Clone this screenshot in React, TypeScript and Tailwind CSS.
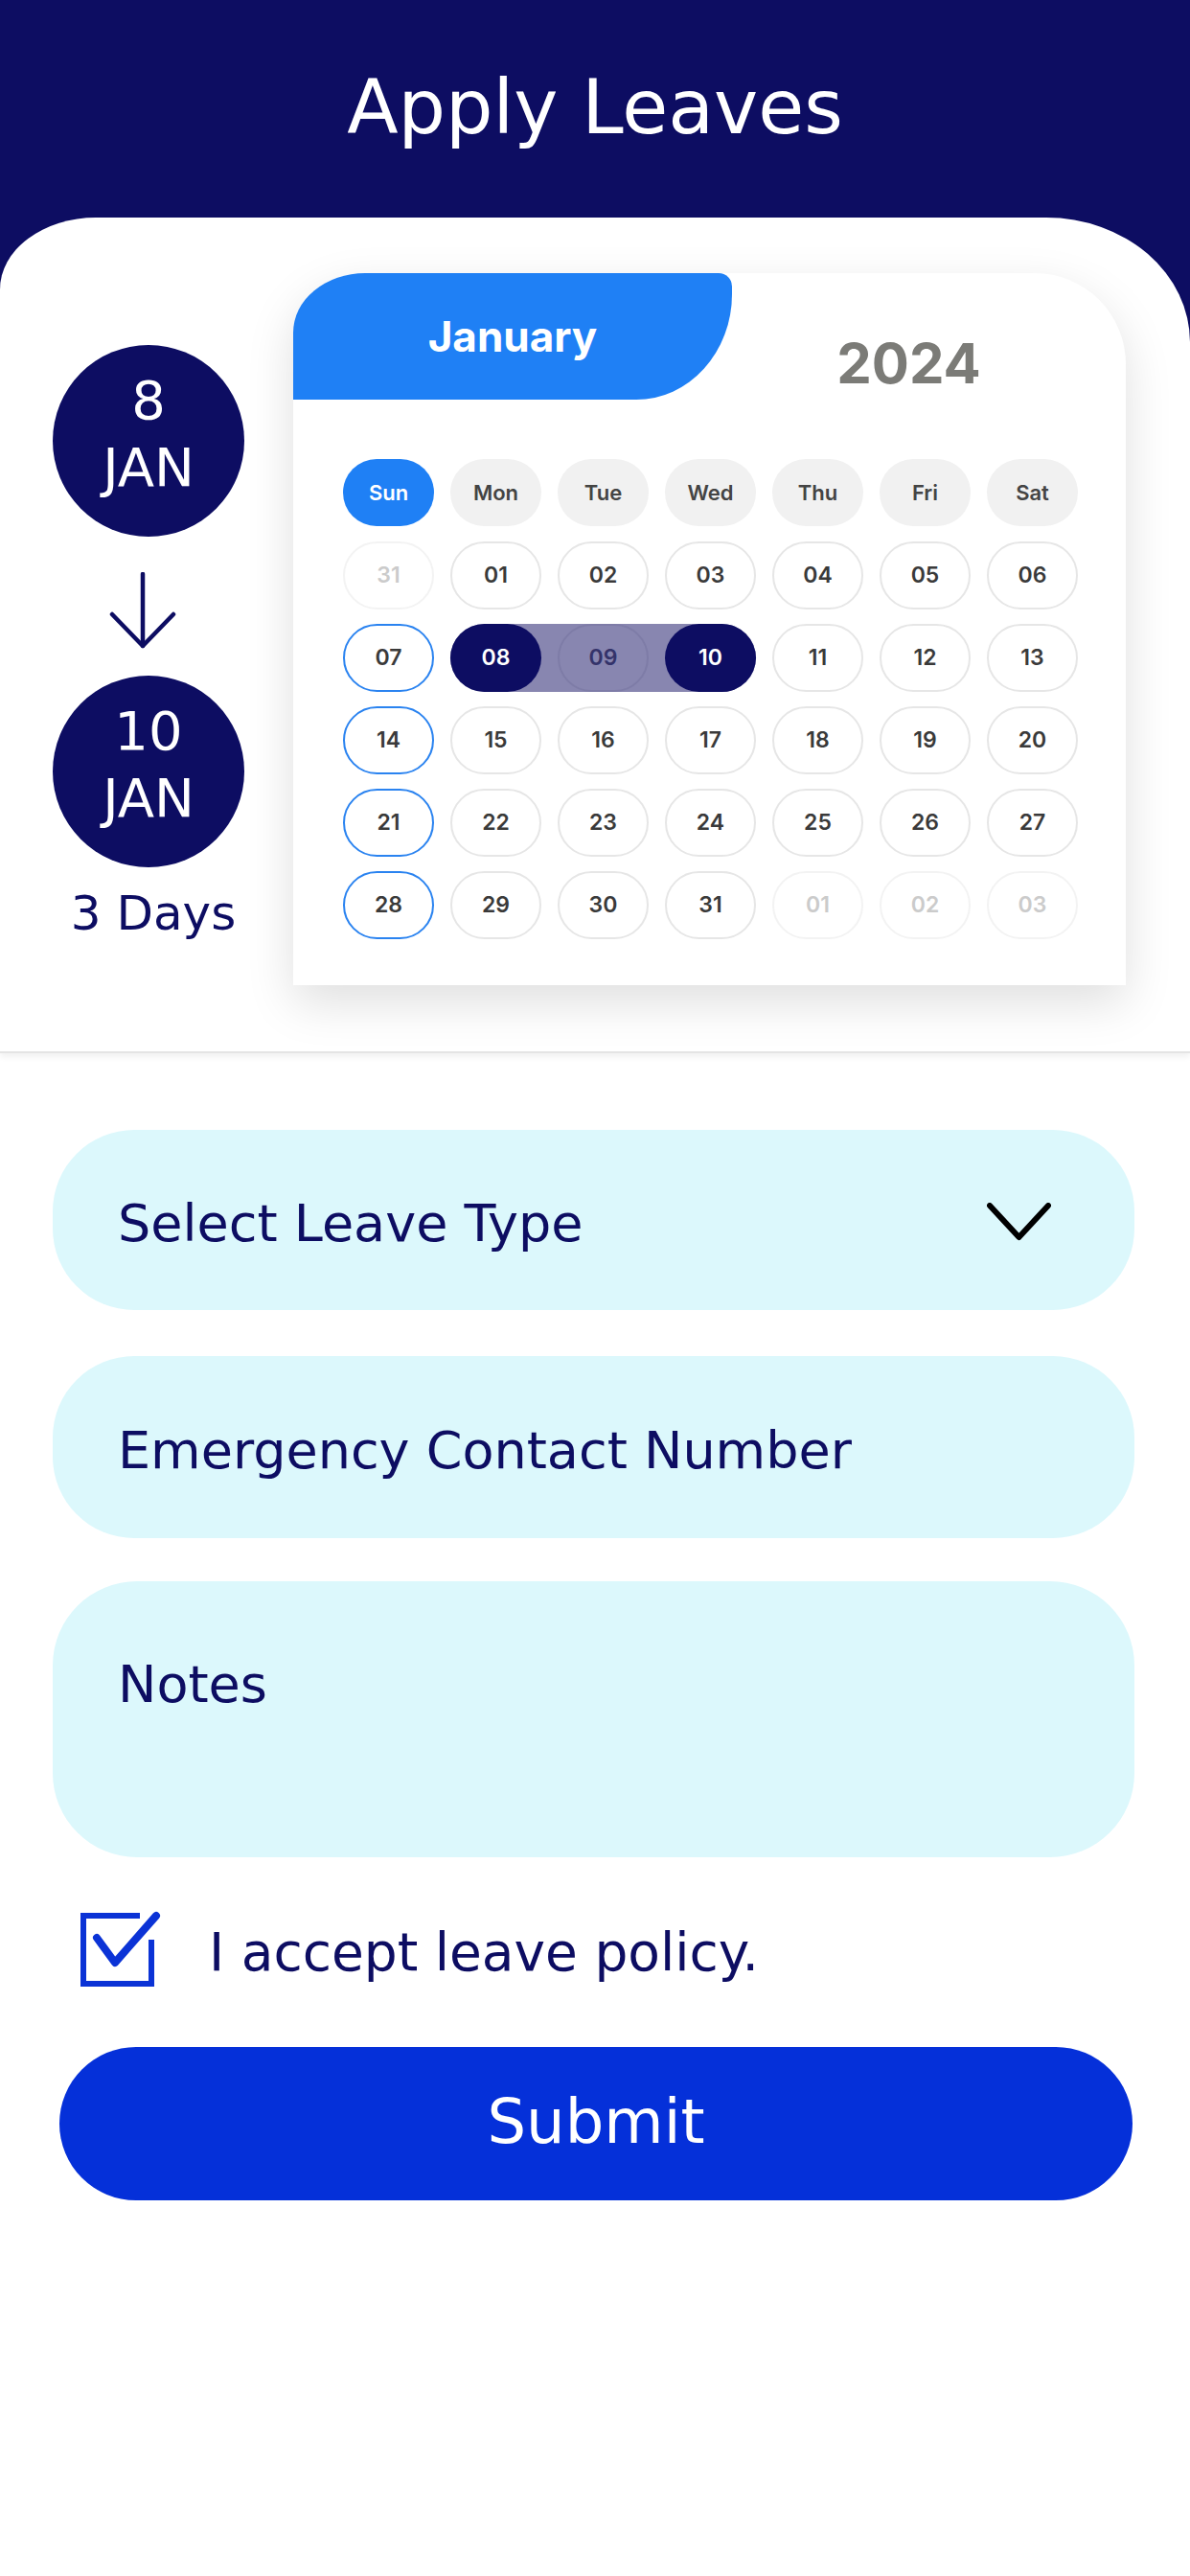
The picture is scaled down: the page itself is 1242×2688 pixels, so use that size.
import React from "react";

type Kind = "normal" | "muted" | "sun" | "sel" | "range";
type Cell = { d: string; k: Kind };

const colStart = [
  "col-start-1",
  "col-start-2",
  "col-start-3",
  "col-start-4",
  "col-start-5",
  "col-start-6",
  "col-start-7",
];

const weeks: Cell[][] = [
  [
    { d: "31", k: "muted" },
    { d: "01", k: "normal" },
    { d: "02", k: "normal" },
    { d: "03", k: "normal" },
    { d: "04", k: "normal" },
    { d: "05", k: "normal" },
    { d: "06", k: "normal" },
  ],
  [
    { d: "07", k: "sun" },
    { d: "08", k: "sel" },
    { d: "09", k: "range" },
    { d: "10", k: "sel" },
    { d: "11", k: "normal" },
    { d: "12", k: "normal" },
    { d: "13", k: "normal" },
  ],
  [
    { d: "14", k: "sun" },
    { d: "15", k: "normal" },
    { d: "16", k: "normal" },
    { d: "17", k: "normal" },
    { d: "18", k: "normal" },
    { d: "19", k: "normal" },
    { d: "20", k: "normal" },
  ],
  [
    { d: "21", k: "sun" },
    { d: "22", k: "normal" },
    { d: "23", k: "normal" },
    { d: "24", k: "normal" },
    { d: "25", k: "normal" },
    { d: "26", k: "normal" },
    { d: "27", k: "normal" },
  ],
  [
    { d: "28", k: "sun" },
    { d: "29", k: "normal" },
    { d: "30", k: "normal" },
    { d: "31", k: "normal" },
    { d: "01", k: "muted" },
    { d: "02", k: "muted" },
    { d: "03", k: "muted" },
  ],
];

const kindClass: Record<Kind, string> = {
  normal: "border-2 border-[#e6e6e6] bg-white text-[#3a3a3a]",
  muted: "border-2 border-[#f3f3f3] bg-white text-[#cbcbcb]",
  sun: "border-2 border-[#2a83f0] bg-white text-[#3a3a3a]",
  sel: "bg-[#0d0d62] text-white",
  range: "border-2 border-[#7e7ca7] bg-transparent text-[#34336a]",
};

const days = ["Sun", "Mon", "Tue", "Wed", "Thu", "Fri", "Sat"];

function DateCircle({ day }: { day: string }) {
  return (
    <div className="w-[200px] h-[200px] rounded-full bg-[#0d0d62] flex flex-col items-center justify-center pb-[14px] text-white font-['DejaVu_Sans',sans-serif] text-[56px] leading-[70px]">
      <span>{day}</span>
      <span>JAN</span>
    </div>
  );
}

export default function App() {
  return (
    <div className="w-[1242px] min-h-[2688px] bg-white font-['DejaVu_Sans',sans-serif]">
      <div className="bg-[#0d0d62]">
        <div className="h-[227px] flex items-center justify-center pb-[4px]">
          <h1 className="text-white text-[78px] leading-none font-normal">Apply Leaves</h1>
        </div>
        <div className="bg-white rounded-tl-[100px_75px] rounded-tr-[150px_130px] pt-[58px] pb-[69px] border-b-2 border-[#e4e4e4] shadow-[0_4px_6px_rgba(0,0,0,0.06)]">
          <div className="flex items-start pl-[55px] gap-[51px]">
            <div className="w-[200px] mt-[75px] flex flex-col items-center">
              <DateCircle day="8" />
              <svg
                width="72"
                height="80"
                viewBox="0 0 72 80"
                className="mt-[37px] mr-[12px]"
                fill="none"
                stroke="#0d0d62"
                strokeWidth="4.5"
                strokeLinecap="round"
                strokeLinejoin="round"
              >
                <path d="M36 2 V77" />
                <path d="M4 44 L36 77 L68 44" />
              </svg>
              <div className="mt-[28px]">
                <DateCircle day="10" />
              </div>
              <div className="mt-[23px] ml-[10px] text-[50px] leading-none text-[#0d0d62]">3 Days</div>
            </div>

            <div className="w-[869px] h-[743px] bg-white rounded-tl-[75px_62px] rounded-tr-[95px] shadow-[0_18px_50px_rgba(0,0,0,0.13)] overflow-hidden font-['Inter',sans-serif]">
              <div className="h-[132px] flex">
                <div className="w-[458px] h-full bg-[#1f80f5] rounded-br-[100px_110px] rounded-tr-[14px] flex items-center justify-center">
                  <span className="text-white text-[44px] font-bold leading-none">January</span>
                </div>
                <div className="flex-1 flex justify-center pt-[65px] pr-[42px]">
                  <span className="text-[#7b7b77] text-[58px] font-bold leading-none">2024</span>
                </div>
              </div>

              <div className="mt-[62px] pl-[52px] pr-[50px] flex flex-col gap-[15px]">
                <div className="grid grid-cols-7 gap-x-[17px] mb-[1px]">
                  {days.map((d, i) => (
                    <div
                      key={d}
                      className={
                        "h-[70px] rounded-full flex items-center justify-center text-[22px] font-semibold " +
                        (i === 0 ? "bg-[#1f80f5] text-white" : "bg-[#f1f1f1] text-[#444444]")
                      }
                    >
                      {d}
                    </div>
                  ))}
                </div>
                {weeks.map((week, wi) => (
                  <div key={wi} className="grid grid-cols-7 gap-x-[17px]">
                    {wi === 1 && (
                      <div className="row-start-1 col-start-2 col-span-3 h-[71px] rounded-full bg-[#8886b0]" />
                    )}
                    {week.map((c, ci) => (
                      <div
                        key={ci}
                        className={
                          "row-start-1 h-[71px] rounded-full flex items-center justify-center text-[23px] font-semibold " +
                          colStart[ci] +
                          " " +
                          kindClass[c.k]
                        }
                      >
                        {c.d}
                      </div>
                    ))}
                  </div>
                ))}
              </div>
            </div>
          </div>
        </div>
      </div>

      <div className="pl-[55px] pr-[58px]">
        <div className="mt-[80px] h-[188px] rounded-[85px] bg-[#dcf8fc] flex items-center justify-between pl-[68px] pr-[87px] pt-[8px]">
          <span className="text-[54px] text-[#0d0d62] leading-none">Select Leave Type</span>
          <svg width="67" height="40" viewBox="0 0 67 40" fill="none" stroke="#000000" strokeWidth="6" strokeLinecap="round" strokeLinejoin="round" className="mb-[4px]">
            <path d="M3 3 L33.5 36 L64 3" />
          </svg>
        </div>
        <div className="mt-[48px] h-[190px] rounded-[85px] bg-[#dcf8fc] flex items-center pl-[68px] pt-[8px]">
          <span className="text-[54px] text-[#0d0d62] leading-none">Emergency Contact Number</span>
        </div>
        <div className="mt-[45px] h-[288px] rounded-[88px] bg-[#dcf8fc] pl-[68px] pt-[76px]">
          <span className="text-[54px] text-[#0d0d62] leading-[1.2]">Notes</span>
        </div>
        <div className="mt-[56px] flex items-center pl-[29px]">
          <svg width="84" height="80" viewBox="0 0 84 80" fill="none" stroke="#0b33d6" strokeLinecap="round" strokeLinejoin="round">
            <path d="M62 5 H3 V76 H74 V30" strokeWidth="6" strokeLinecap="butt" strokeLinejoin="miter" />
            <path d="M17 28 L36 54 L79 5" strokeWidth="8" />
          </svg>
          <span className="ml-[50px] mt-[6px] text-[55px] text-[#0d0d62] leading-none">I accept leave policy.</span>
        </div>
      </div>
      <div className="mt-[62px] ml-[62px] mr-[60px] h-[160px] rounded-full bg-[#0530d9] flex items-center justify-center pb-[4px]">
        <span className="text-white text-[64px] leading-none">Submit</span>
      </div>
    </div>
  );
}
